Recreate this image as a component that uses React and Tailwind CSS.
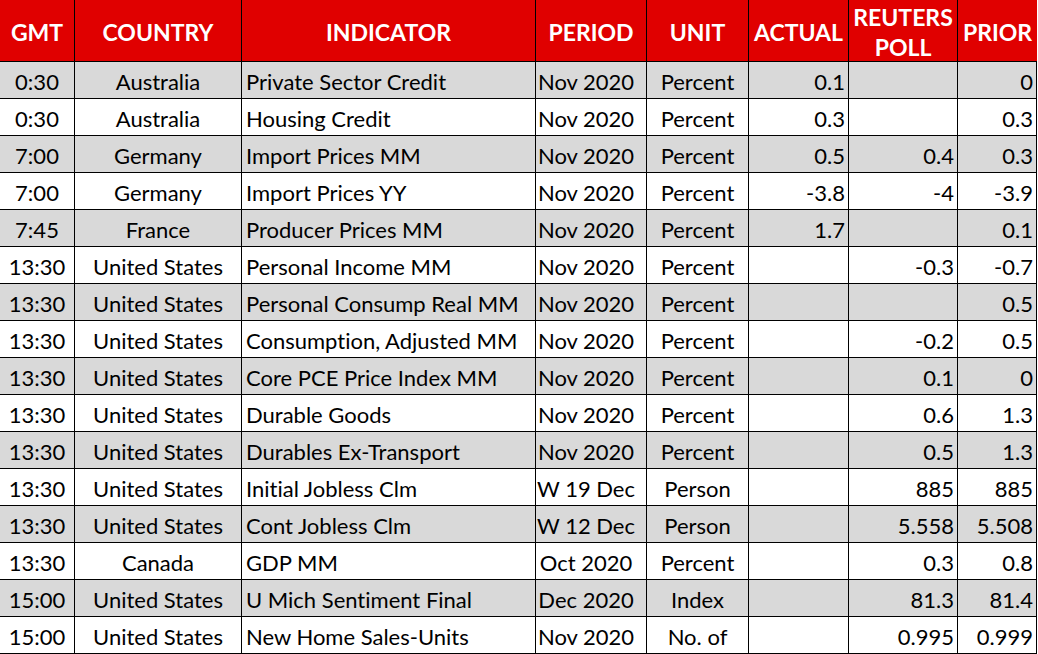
import React from "react";

// economic calendar table
const rows = [
    ["0:30", "Australia", "Private Sector Credit", "Nov 2020", "Percent", "0.1", "", "0"],
    ["0:30", "Australia", "Housing Credit", "Nov 2020", "Percent", "0.3", "", "0.3"],
    ["7:00", "Germany", "Import Prices MM", "Nov 2020", "Percent", "0.5", "0.4", "0.3"],
    ["7:00", "Germany", "Import Prices YY", "Nov 2020", "Percent", "-3.8", "-4", "-3.9"],
    ["7:45", "France", "Producer Prices MM", "Nov 2020", "Percent", "1.7", "", "0.1"],
    ["13:30", "United States", "Personal Income MM", "Nov 2020", "Percent", "", "-0.3", "-0.7"],
    ["13:30", "United States", "Personal Consump Real MM", "Nov 2020", "Percent", "", "", "0.5"],
    ["13:30", "United States", "Consumption, Adjusted MM", "Nov 2020", "Percent", "", "-0.2", "0.5"],
    ["13:30", "United States", "Core PCE Price Index MM", "Nov 2020", "Percent", "", "0.1", "0"],
    ["13:30", "United States", "Durable Goods", "Nov 2020", "Percent", "", "0.6", "1.3"],
    ["13:30", "United States", "Durables Ex-Transport", "Nov 2020", "Percent", "", "0.5", "1.3"],
    ["13:30", "United States", "Initial Jobless Clm", "W 19 Dec", "Person", "", "885", "885"],
    ["13:30", "United States", "Cont Jobless Clm", "W 12 Dec", "Person", "", "5.558", "5.508"],
    ["13:30", "Canada", "GDP MM", "Oct 2020", "Percent", "", "0.3", "0.8"],
    ["15:00", "United States", "U Mich Sentiment Final", "Dec 2020", "Index", "", "81.3", "81.4"],
    ["15:00", "United States", "New Home Sales-Units", "Nov 2020", "No. of", "", "0.995", "0.999"],
]

const align = [
    "justify-center",
    "justify-center",
    "justify-start pl-1",
    "justify-center pr-[10px]",
    "justify-center",
    "justify-end pr-[3px]",
    "justify-end pr-[3px]",
    "justify-end pr-[3px]",
]

export default function App() {
    return (
        <div className="w-[1038px] h-[654px] bg-white overflow-hidden font-['Lato',sans-serif] [font-variant-ligatures:none]">
            <div className="grid grid-cols-[75px_167px_294px_111px_102px_100px_109px_79px]">

                {/* header */}
                <div className="h-[62px] pt-1 bg-[#e00000] border-r border-b border-black flex items-center justify-center text-white font-bold text-[23px]">GMT</div>
                <div className="h-[62px] pt-1 bg-[#e00000] border-r border-b border-black flex items-center justify-center text-white font-bold text-[23px]">COUNTRY</div>
                <div className="h-[62px] pt-1 bg-[#e00000] border-r border-b border-black flex items-center justify-center text-white font-bold text-[23px]">INDICATOR</div>
                <div className="h-[62px] pt-1 bg-[#e00000] border-r border-b border-black flex items-center justify-center text-white font-bold text-[23px]">PERIOD</div>
                <div className="h-[62px] pt-1 bg-[#e00000] border-r border-b border-black flex items-center justify-center text-white font-bold text-[23px]">UNIT</div>
                <div className="h-[62px] pt-1 bg-[#e00000] border-r border-b border-black flex items-center justify-center text-white font-bold text-[23px]">ACTUAL</div>
                <div className="h-[62px] pt-[2px] bg-[#e00000] border-r border-b border-black flex items-center justify-center text-center text-white font-bold text-[23px] leading-[30px]">REUTERS<br />POLL</div>
                <div className="h-[62px] pt-1 bg-[#e00000] border-b border-black flex items-center justify-center text-white font-bold text-[23px]">PRIOR</div>

                {/* data rows */}
                {rows.map((row, i) =>
                    row.map((cell, j) => (
                        <div
                            key={i + "-" + j}
                            className={
                                "h-[37px] pt-[2px] border-r border-b border-black flex items-center text-[22px] text-black whitespace-nowrap " +
                                align[j] + " " +
                                (i % 2 === 0 ? "bg-[#d9d9d9]" : "bg-white")
                            }
                        >
                            {cell}
                        </div>
                    ))
                )}
            </div>
        </div>
    )
}
